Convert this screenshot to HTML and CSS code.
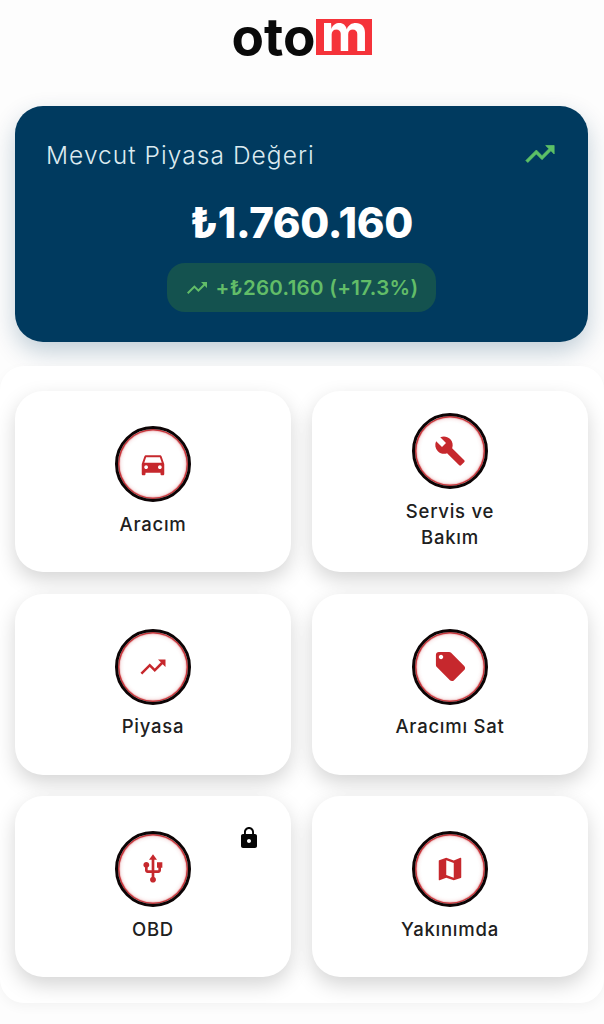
FILE: index.html
```html
<!DOCTYPE html>
<html lang="en">
<head>
    <meta charset="UTF-8">
    <meta name="viewport" content="width=device-width, initial-scale=1.0">
    <title>otom</title>
    <link rel="stylesheet" href="styles.css">
</head>
<body>

    <!-- Logo -->
    <header class="top-bar">
        <div class="logo"><span class="logo-dark">oto</span><span class="logo-red">m</span></div>
    </header>

    <!-- Market value card -->
    <section class="value-card">
        <div class="value-head">
            <span class="value-title">Mevcut Piyasa Değeri</span>
            <svg class="value-trend" viewBox="0 0 24 24"><path d="M16 6l2.29 2.29-4.88 4.88-4-4L2 16.59 3.41 18l6-6 4 4 6.3-6.29L22 12V6z"/></svg>
        </div>
        <div class="value-amount">₺1.760.160</div>
        <div class="value-change">
            <svg class="change-trend" viewBox="0 0 24 24"><path d="M16 6l2.29 2.29-4.88 4.88-4-4L2 16.59 3.41 18l6-6 4 4 6.3-6.29L22 12V6z"/></svg>
            <span>+₺260.160 (+17.3%)</span>
        </div>
    </section>

    <!-- Menu grid -->
    <main class="sheet">
        <div class="menu-grid">
            <a class="menu-card">
                <span class="menu-icon">
                    <svg viewBox="0 0 24 24"><path d="M18.92 6.01C18.72 5.42 18.16 5 17.5 5h-11c-.66 0-1.21.42-1.42 1.01L3 12v8c0 .55.45 1 1 1h1c.55 0 1-.45 1-1v-1h12v1c0 .55.45 1 1 1h1c.55 0 1-.45 1-1v-8l-2.08-5.99zM6.5 16c-.83 0-1.5-.67-1.5-1.5S5.67 13 6.5 13s1.500.67 1.500 1.500S7.330 16 6.500 16zm11 0c-.83 0-1.500-.67-1.500-1.500s.67-1.500 1.500-1.500 1.500.67 1.500 1.500-.67 1.500-1.500 1.500zM5 11l1.500-4.500h11L19 11H5z"/></svg>
                </span>
                <span class="menu-label">Aracım</span>
            </a>
            <a class="menu-card">
                <span class="menu-icon">
                    <svg class="icon-large" viewBox="0 0 24 24"><path d="M22.7 19l-9.100-9.100c.9-2.300.4-5-1.500-6.900-2-2-5-2.400-7.400-1.300L9 6 6 9 1.600 4.700C.4 7.100.9 10.100 2.900 12.100c1.900 1.900 4.600 2.400 6.900 1.500l9.100 9.100c.4.4 1 .4 1.400 0l2.300-2.300c.5-.4.5-1.100.1-1.400z"/></svg>
                </span>
                <span class="menu-label">Servis ve<br>Bakım</span>
            </a>
            <a class="menu-card">
                <span class="menu-icon">
                    <svg viewBox="0 0 24 24"><path d="M16 6l2.290 2.290-4.880 4.880-4-4L2 16.590 3.410 18l6-6 4 4 6.300-6.290L22 12V6z"/></svg>
                </span>
                <span class="menu-label">Piyasa</span>
            </a>
            <a class="menu-card">
                <span class="menu-icon">
                    <svg class="icon-tag" viewBox="0 0 24 24"><path d="M21.410 11.580l-9-9C12.050 2.220 11.550 2 11 2H4c-1.100 0-2 .9-2 2v7c0 .55.22 1.050.59 1.420l9 9c.36.36.86.58 1.410.58.55 0 1.050-.22 1.410-.59l7-7c.37-.36.59-.86.59-1.410 0-.55-.23-1.060-.59-1.420zM5.500 7C4.670 7 4 6.330 4 5.500S4.670 4 5.500 4 7 4.670 7 5.500 6.330 7 5.500 7z"/></svg>
                </span>
                <span class="menu-label">Aracımı Sat</span>
            </a>
            <a class="menu-card">
                <svg class="menu-lock" viewBox="0 0 24 24"><path d="M18 8h-1V6c0-2.760-2.240-5-5-5S7 3.240 7 6v2H6c-1.100 0-2 .9-2 2v10c0 1.100.9 2 2 2h12c1.100 0 2-.9 2-2V10c0-1.100-.9-2-2-2zm-6 9c-1.100 0-2-.9-2-2s.9-2 2-2 2 .9 2 2-.9 2-2 2zm3.100-9H8.900V6c0-1.710 1.390-3.100 3.100-3.100 1.710 0 3.100 1.390 3.100 3.100v2z"/></svg>
                <span class="menu-icon">
                    <svg class="icon-large" viewBox="0 0 24 24"><path d="M15 7v4h1v2h-3V5h2l-3-4-3 4h2v8H8v-2.070c.7-.37 1.200-1.080 1.200-1.930 0-1.210-.99-2.200-2.200-2.200-1.210 0-2.200.99-2.200 2.200 0 .85.5 1.560 1.200 1.930V13c0 1.110.89 2 2 2h3v3.050c-.71.37-1.200 1.100-1.200 1.950 0 1.220.99 2.200 2.200 2.200 1.210 0 2.200-.98 2.200-2.200 0-.85-.49-1.580-1.200-1.950V15h3c1.110 0 2-.89 2-2v-2h1V7h-4z"/></svg>
                </span>
                <span class="menu-label">OBD</span>
            </a>
            <a class="menu-card">
                <span class="menu-icon">
                    <svg viewBox="0 0 24 24"><path d="M20.500 3l-.16.03L15 5.100 9 3 3.360 4.900c-.21.07-.36.25-.36.48V20.500c0 .28.22.5.5.5l.16-.03L9 18.900l6 2.100 5.640-1.900c.21-.07.36-.25.36-.48V3.500c0-.28-.22-.5-.5-.5zM15 19l-6-2.110V5l6 2.110V19z"/></svg>
                </span>
                <span class="menu-label">Yakınımda</span>
            </a>
        </div>
    </main>

</body>
</html>
```

FILE: styles.css
```css
/* Page */
html, body {
    height: 1024px;
    overflow: hidden;
}

body {
    margin: 0;
    background-color: #fdfdfd;
    font-family: "Inter", "Liberation Sans", sans-serif;
}

/* Logo */
.top-bar {
    height: 106px;
    display: flex;
    justify-content: center;
    padding-top: 19px;
    box-sizing: border-box;
}

.logo {
    display: flex;
    height: 36px;
    font-family: "Inter", sans-serif;
    font-weight: 700;
    font-size: 53px;
    line-height: 36px;
    letter-spacing: 0;
}

.logo-dark {
    color: #0a0a0a;
}

.logo-red {
    width: 56px;
    height: 36px;
    background-color: #f5333a;
    color: #fff;
    text-align: center;
    font-size: 52px;
    line-height: 28px;
    margin-left: 1px;
}

/* Market value card */
.value-card {
    height: 236px;
    margin: 0 16px 24px 15px;
    padding: 33px 31px 0;
    box-sizing: border-box;
    background-color: #003a5f;
    border-radius: 28px;
    box-shadow: 0 10px 24px rgba(0, 58, 95, 0.24);
}

.value-head {
    display: flex;
    justify-content: space-between;
    align-items: center;
    height: 32px;
}

.value-title {
    font-family: "Inter", sans-serif;
    font-weight: 300;
    font-size: 24.5px;
    color: #dceaf0;
    letter-spacing: 1.05px;
}

.value-trend {
    width: 34px;
    height: 34px;
    fill: #5cc066;
    stroke: #5cc066;
    stroke-width: 0.5;
    margin-top: -3px;
}

.value-amount {
    margin-top: 27px;
    text-align: center;
    font-family: "Inter", "DejaVu Sans", sans-serif;
    font-weight: 800;
    font-size: 42px;
    line-height: 50px;
    letter-spacing: -0.3px;
    color: #fff;
}

.value-change {
    display: flex;
    align-items: center;
    justify-content: center;
    gap: 7px;
    width: 269px;
    height: 49px;
    margin: 15px auto 0;
    border-radius: 18px;
    background-color: #14524f;
    color: #62bd68;
    font-family: "Inter", "DejaVu Sans", sans-serif;
    font-weight: 600;
    font-size: 20.5px;
    letter-spacing: 0.3px;
}

.change-trend {
    width: 24px;
    height: 24px;
    fill: #62bd68;
}

/* Menu grid */
.sheet {
    height: 637px;
    padding: 25px 16px 0 15px;
    box-sizing: border-box;
    background-color: #fff;
    border-radius: 24px;
    box-shadow: 0 4px 12px rgba(0, 0, 0, 0.04);
}

.menu-grid {
    display: grid;
    grid-template-columns: 276px 276px;
    grid-auto-rows: 181px;
    justify-content: space-between;
    row-gap: 21.5px;
}

/* Circle and label sit centred, so a two line label lifts the circle */
.menu-card {
    position: relative;
    display: flex;
    flex-direction: column;
    align-items: center;
    justify-content: center;
    box-sizing: border-box;
    background-color: #fff;
    border-radius: 28px;
    box-shadow: 0 8px 20px rgba(0, 0, 0, 0.17);
}

.menu-icon {
    display: flex;
    align-items: center;
    justify-content: center;
    width: 76px;
    height: 76px;
    box-sizing: border-box;
    border: 3px solid #0c0405;
    border-radius: 50%;
    background-color: #fff;
    box-shadow: inset 0 0 1px 1.5px #c4272d, inset 0 0 4px 1.5px rgba(196, 39, 45, 0.3);
}

.menu-icon svg {
    width: 30px;
    height: 30px;
    fill: #c6282d;
}

.menu-icon .icon-large {
    width: 32px;
    height: 32px;
}

.menu-icon .icon-tag {
    width: 35px;
    height: 35px;
}

.menu-label {
    margin-top: 8.5px;
    font-size: 18.5px;
    line-height: 26px;
    font-weight: 500;
    letter-spacing: 0.75px;
    color: #202020;
    text-align: center;
}

.menu-lock {
    position: absolute;
    top: 30px;
    right: 30px;
    width: 24px;
    height: 24px;
    fill: #050505;
}
```
